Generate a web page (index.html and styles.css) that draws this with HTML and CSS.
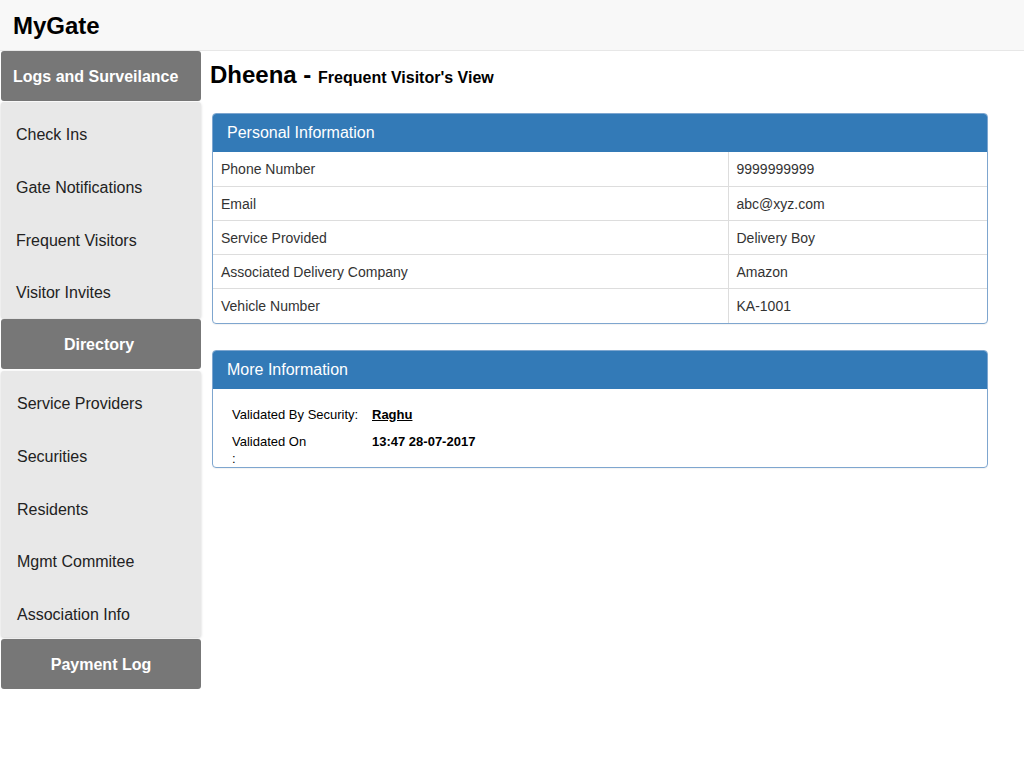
FILE: index.html
```html
<!DOCTYPE html>
<html>
<head>
<meta charset="utf-8">
<link rel="stylesheet" href="styles.css">
</head>
<body>
<header class="topbar"><span class="brand">MyGate</span></header>
<div class="layout">
  <aside class="sidebar">
    <div class="nav-head nav-head-left">Logs and Surveilance</div>
    <ul class="nav-list nav-list-a">
      <li>Check Ins</li>
      <li>Gate Notifications</li>
      <li>Frequent Visitors</li>
      <li>Visitor Invites</li>
    </ul>
    <div class="nav-head nav-head-dir">Directory</div>
    <ul class="nav-list nav-list-b">
      <li>Service Providers</li>
      <li>Securities</li>
      <li>Residents</li>
      <li>Mgmt Commitee</li>
      <li>Association Info</li>
    </ul>
    <div class="nav-head nav-head-last">Payment Log</div>
  </aside>
  <main class="main">
    <h1 class="title">Dheena - <span class="subtitle">Frequent Visitor's View</span></h1>
    <section class="panel">
      <div class="panel-heading">Personal Information</div>
      <table class="info-table">
        <tr><td class="key">Phone Number</td><td>9999999999</td></tr>
        <tr><td class="key">Email</td><td>abc@xyz.com</td></tr>
        <tr><td class="key">Service Provided</td><td>Delivery Boy</td></tr>
        <tr><td class="key">Associated Delivery Company</td><td>Amazon</td></tr>
        <tr class="last"><td class="key">Vehicle Number</td><td>KA-1001</td></tr>
      </table>
    </section>
    <section class="panel panel-more">
      <div class="panel-heading">More Information</div>
      <div class="more-body">
        <div class="more-row">
          <div class="more-label">Validated By Security:</div>
          <div class="more-value"><a class="link">Raghu</a></div>
        </div>
        <div class="more-row">
          <div class="more-label">Validated On<br>:</div>
          <div class="more-value">13:47 28-07-2017</div>
        </div>
      </div>
    </section>
  </main>
</div>
</body>
</html>
```
FILE: styles.css
```css
* { box-sizing: border-box; }
body {
  margin: 0;
  font-family: "Liberation Sans", Arial, sans-serif;
  color: #333;
  background: #fff;
}
.topbar {
  height: 51px;
  background: #f8f8f8;
  border-bottom: 1px solid #e7e7e7;
  display: flex;
  align-items: center;
  padding-left: 13px;
  padding-top: 2px;
}
.brand {
  font-size: 24px;
  font-weight: bold;
  color: #000;
}
.layout {
  display: flex;
  align-items: flex-start;
}
.sidebar {
  width: 200px;
  margin-left: 1px;
  display: flex;
  flex-direction: column;
}
.nav-head {
  height: 50px;
  background: #777;
  border-radius: 3px;
  color: #fff;
  font-weight: bold;
  font-size: 16px;
  display: flex;
  align-items: center;
  justify-content: center;
  padding-top: 1px;
}
.nav-head-left {
  justify-content: flex-start;
  padding-left: 12px;
}
.nav-head-dir { padding-right: 4px; }
.nav-list {
  list-style: none;
  margin: 1px 0 1px;
  padding: 6px 0 0;
  background: #e8e8e8;
  border-radius: 3px;
  box-shadow: 0 1px 3px rgba(0,0,0,0.18);
  overflow: hidden;
}
.nav-list-a { height: 216px; padding-top: 7px; }
.nav-list-b { height: 266px; margin-top: 2px; padding-top: 7px; }
.nav-list li {
  height: 52.7px;
  display: flex;
  align-items: center;
  padding-left: 15px;
  font-size: 16px;
  color: #222;
}
.nav-list-b li { padding-left: 16px; }
.nav-head-last { margin-top: 1px; }
.main {
  flex: 1;
  padding: 0 36px 0 9px;
}
.title {
  margin: 11px 0 0;
  font-size: 24px;
  font-weight: bold;
  color: #000;
  line-height: 26px;
  height: 26px;
}
.subtitle { font-size: 16px; }
.panel {
  margin: 25px 0 0 2px;
  border: 1px solid #7ea6cf;
  border-radius: 4px;
  overflow: hidden;
  box-shadow: 0 1px 1px rgba(0,0,0,0.05);
}
.panel-more { margin-top: 26px; }
.panel-heading {
  background: #337ab7;
  color: #fff;
  font-size: 16px;
  height: 39px;
  display: flex;
  align-items: center;
  padding-left: 15px;
  margin: -1px -1px 0;
  padding-top: 1px;
}
.info-table {
  width: 100%;
  border-collapse: collapse;
  font-size: 14px;
}
.info-table td {
  height: 34px;
  padding: 1px 8px 0;
  border-top: 1px solid #ddd;
  color: #333;
}
.info-table tr.last td { height: 35px; }
.info-table tr:first-child td { border-top: 0; }
.info-table td.key {
  width: 515px;
  border-right: 1px solid #ddd;
}
.more-body {
  padding: 17px 19px 0;
  font-size: 13px;
  color: #000;
}
.more-row {
  display: flex;
  line-height: 17px;
  margin-bottom: 10px;
}
.more-row:last-child { margin-bottom: 0; }
.more-label { width: 140px; }
.more-value { font-weight: bold; }
.link {
  color: #000;
  text-decoration: underline;
}
```
